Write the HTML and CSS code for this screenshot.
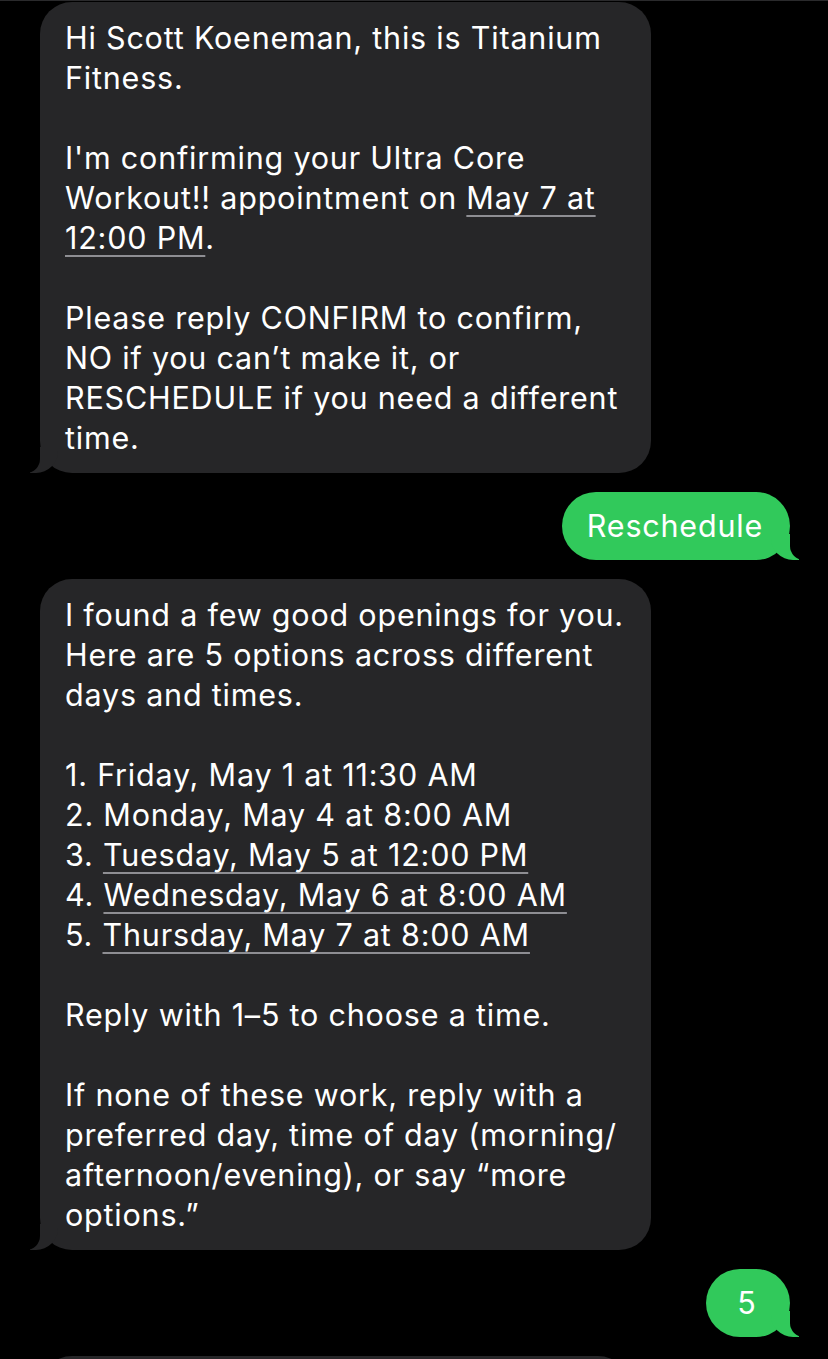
FILE: index.html
```html
<!DOCTYPE html>
<html lang="en">
<head>
<meta charset="utf-8">
<title>Messages</title>
<link rel="stylesheet" href="styles.css">
</head>
<body>
<div class="thread">
  <div class="msg them wide">
    <span class="ln">Hi Scott Koeneman, this is Titanium</span>
    <span class="ln">Fitness.</span>
    <span class="ln">&nbsp;</span>
    <span class="ln">I'm confirming your Ultra Core</span>
    <span class="ln">Workout!! appointment on <span class="lk">May 7 at</span></span>
    <span class="ln"><span class="lk">12:00 PM</span>.</span>
    <span class="ln">&nbsp;</span>
    <span class="ln">Please reply CONFIRM to confirm,</span>
    <span class="ln">NO if you can’t make it, or</span>
    <span class="ln">RESCHEDULE if you need a different</span>
    <span class="ln">time.</span>
  </div>

  <div class="msg me">Reschedule</div>

  <div class="msg them wide">
    <span class="ln">I found a few good openings for you.</span>
    <span class="ln">Here are 5 options across different</span>
    <span class="ln">days and times.</span>
    <span class="ln">&nbsp;</span>
    <span class="ln">1. Friday, May 1 at 11:30 AM</span>
    <span class="ln">2. Monday, May 4 at 8:00 AM</span>
    <span class="ln">3. <span class="lk">Tuesday, May 5 at 12:00 PM</span></span>
    <span class="ln">4. <span class="lk">Wednesday, May 6 at 8:00 AM</span></span>
    <span class="ln">5. <span class="lk">Thursday, May 7 at 8:00 AM</span></span>
    <span class="ln">&nbsp;</span>
    <span class="ln">Reply with 1–5 to choose a time.</span>
    <span class="ln">&nbsp;</span>
    <span class="ln">If none of these work, reply with a</span>
    <span class="ln">preferred day, time of day (morning/</span>
    <span class="ln">afternoon/evening), or say “more</span>
    <span class="ln">options.”</span>
  </div>

  <div class="msg me">5</div>

  <div class="msg them next"></div>
</div>
</body>
</html>
```

FILE: styles.css
```css
html, body {
  margin: 0;
  padding: 0;
  background: #000;
  overflow: hidden;
}

body {
  font-family: Inter, "Noto Sans", "Liberation Sans", sans-serif;
  color: #fff;
  border-top: 1px solid #2a2a2c;
}

.thread {
  display: flex;
  flex-direction: column;
  gap: 19px;
  padding: 1px 38px 0 40px;
  height: 1358px;
  box-sizing: border-box;
  overflow: hidden;
}

.msg {
  position: relative;
  flex-shrink: 0;
  font-size: 30.5px;
  line-height: 40px;
  letter-spacing: 0.8px;
}

.ln {
  display: block;
  white-space: nowrap;
}

.lk {
  text-decoration: underline;
  text-decoration-color: #8e8e93;
  text-decoration-thickness: 2px;
  text-underline-offset: 6px;
}

.them {
  align-self: flex-start;
  background: #262628;
  border-radius: 32px;
  padding: 16px 25px 15px 25px;
  box-sizing: border-box;
}

.wide {
  width: 611px;
}

.them::before {
  content: "";
  position: absolute;
  bottom: 0;
  left: -10px;
  width: 28px;
  height: 26px;
  background: #262628;
  border-bottom-right-radius: 22px;
}

.them::after {
  content: "";
  position: absolute;
  bottom: 0;
  left: -16px;
  width: 16px;
  height: 26px;
  background: #000;
  border-bottom-right-radius: 14px;
}

.me {
  align-self: flex-end;
  background: #31c95b;
  border-radius: 34px;
  padding: 14px 27px 14px 25px;
  min-width: 32px;
  text-align: center;
}

.me::before {
  content: "";
  position: absolute;
  bottom: 0;
  right: -9px;
  width: 28px;
  height: 26px;
  background: #31c95b;
  border-bottom-left-radius: 22px;
}

.me::after {
  content: "";
  position: absolute;
  bottom: 0;
  right: -16px;
  width: 16px;
  height: 26px;
  background: #000;
  border-bottom-left-radius: 14px;
}

.next {
  width: 590px;
  height: 90px;
}

.next::before,
.next::after {
  display: none;
}
```
